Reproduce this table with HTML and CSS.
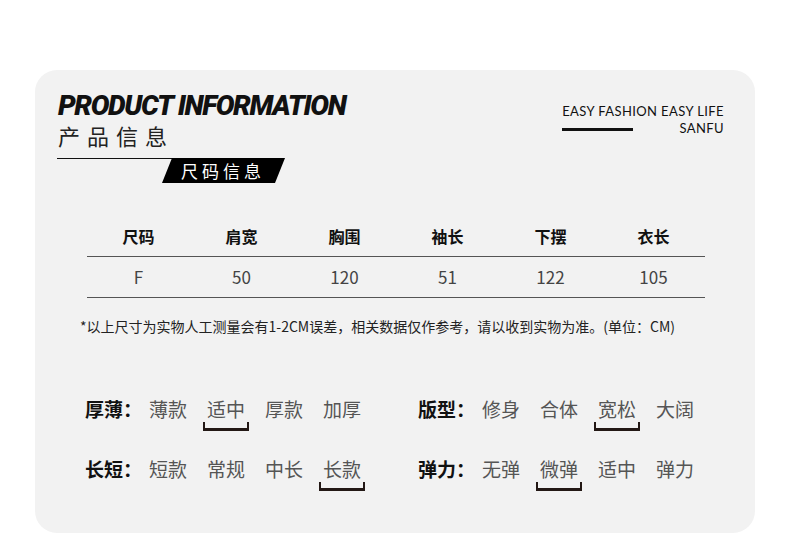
FILE: index.html
```html
<!DOCTYPE html>
<html lang="zh-CN">
<head>
<meta charset="utf-8">
<title>Product Information</title>
<link rel="stylesheet" href="styles.css">
</head>
<body>
<div class="card">
  <div class="head">
    <div class="head-left">
      <div class="title-en">PRODUCT INFORMATION</div>
      <div class="title-cn">产品信息</div>
      <div class="tag-row">
        <div class="tag-line"></div>
        <div class="tag">尺码信息</div>
      </div>
    </div>
    <div class="head-right">
      <div class="slogan">EASY FASHION EASY LIFE</div>
      <div class="brand-row">
        <div class="brand-bar"></div>
        <div class="brand">SANFU</div>
      </div>
    </div>
  </div>

  <div class="size-table">
    <div class="cell th">尺码</div>
    <div class="cell th">肩宽</div>
    <div class="cell th">胸围</div>
    <div class="cell th">袖长</div>
    <div class="cell th">下摆</div>
    <div class="cell th">衣长</div>
    <div class="cell td">F</div>
    <div class="cell td">50</div>
    <div class="cell td">120</div>
    <div class="cell td">51</div>
    <div class="cell td">122</div>
    <div class="cell td">105</div>
  </div>

  <div class="note">*以上尺寸为实物人工测量会有1-2CM误差，相关数据仅作参考，请以收到实物为准。(单位：CM)</div>

  <div class="attrs">
    <div class="attr">
      <span class="label">厚薄：</span>
      <span class="opt">薄款</span>
      <span class="opt selected">适中</span>
      <span class="opt">厚款</span>
      <span class="opt">加厚</span>
    </div>
    <div class="attr">
      <span class="label">版型：</span>
      <span class="opt">修身</span>
      <span class="opt">合体</span>
      <span class="opt selected">宽松</span>
      <span class="opt">大阔</span>
    </div>
    <div class="attr">
      <span class="label">长短：</span>
      <span class="opt">短款</span>
      <span class="opt">常规</span>
      <span class="opt">中长</span>
      <span class="opt selected">长款</span>
    </div>
    <div class="attr">
      <span class="label">弹力：</span>
      <span class="opt">无弹</span>
      <span class="opt selected">微弹</span>
      <span class="opt">适中</span>
      <span class="opt">弹力</span>
    </div>
  </div>
</div>
</body>
</html>
```
FILE: styles.css
```css
* { box-sizing: border-box; }
html, body { margin: 0; padding: 0; background: #ffffff; }
body {
  font-family: "Noto Sans CJK SC", "Noto Sans", sans-serif;
  color: #222;
}
.card {
  margin: 70px 35px 0 35px;
  width: 720px;
  height: 463px;
  background: #f2f2f2;
  border-radius: 22px;
  padding: 20px 31px 0 22px;
}
.head {
  display: flex;
  justify-content: space-between;
  align-items: flex-start;
}
.title-en {
  font-family: Roboto, "Liberation Sans", sans-serif;
  font-weight: 900;
  font-style: italic;
  font-size: 28px;
  line-height: 32px;
  letter-spacing: -1.35px;
  color: #111;
  margin-left: 1px;
}
.title-cn {
  font-size: 22px;
  line-height: 30px;
  letter-spacing: 7px;
  color: #222;
  margin-top: -2px;
  margin-left: 1px;
}
.tag-row {
  display: flex;
  align-items: flex-start;
  margin-top: 8px;
}
.tag-line {
  width: 115px;
  height: 1px;
  background: #111;
}
.tag {
  margin-left: -10px;
  width: 123px;
  height: 25px;
  background: #000;
  color: #fff;
  clip-path: polygon(10px 0, 123px 0, 113px 25px, 0 25px);
  font-size: 17px;
  line-height: 25px;
  letter-spacing: 4px;
  padding-left: 19px;
}
.head-right {
  margin-top: 13px;
  display: flex;
  flex-direction: column;
  align-items: flex-end;
}
.slogan {
  font-family: Lato, "Open Sans", sans-serif;
  font-size: 13px;
  line-height: 16px;
  letter-spacing: 0.4px;
  color: #111;
}
.brand-row {
  display: flex;
  align-items: center;
  width: 100%;
  justify-content: space-between;
  margin-top: 1px;
}
.brand-bar {
  width: 71px;
  height: 3px;
  background: #111;
  margin-top: 3px;
}
.brand {
  font-family: Lato, "Open Sans", sans-serif;
  font-size: 13px;
  line-height: 16px;
  letter-spacing: 0.4px;
  color: #111;
}
.size-table {
  display: grid;
  grid-template-columns: repeat(6, 103px);
  margin: 33px 0 0 30px;
  width: 618px;
}
.cell {
  text-align: center;
  height: 41px;
  line-height: 40px;
  border-bottom: 1px solid #555;
}
.th {
  font-size: 16px;
  font-weight: 700;
  color: #111;
}
.td {
  font-size: 17px;
  color: #444;
}
.note {
  font-size: 14px;
  line-height: 20px;
  color: #222;
  margin: 18px 0 0 23px;
  white-space: nowrap;
}
.attrs {
  display: grid;
  grid-template-columns: 333px 300px;
  row-gap: 34px;
  margin: 60px 0 0 28px;
}
.attr {
  display: flex;
  align-items: center;
  height: 26px;
  font-size: 19px;
  line-height: 26px;
  white-space: nowrap;
}
.label {
  font-weight: 700;
  color: #111;
  width: 64px;
  flex: none;
}
.opt {
  position: relative;
  color: #555;
  margin-right: 20px;
  flex: none;
}
.opt.selected::after {
  content: "";
  position: absolute;
  left: -4px;
  right: -4px;
  top: 100%;
  height: 6px;
  border: 2px solid #231815;
  border-top: none;
  border-bottom-width: 3px;
}
```
